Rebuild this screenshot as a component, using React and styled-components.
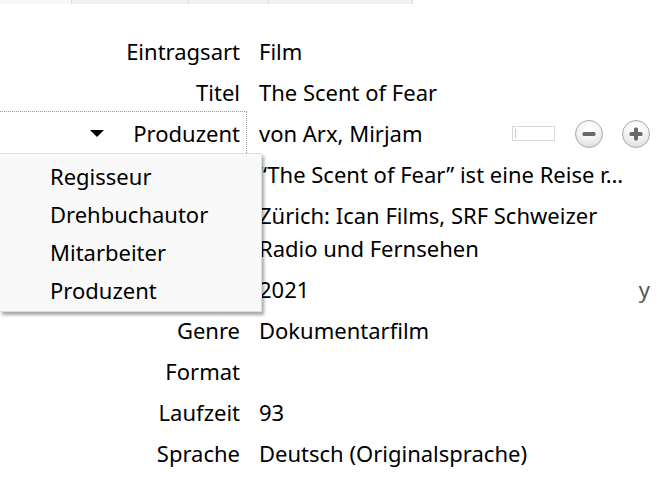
import React from "react";
import styled, { createGlobalStyle } from "styled-components";

const Global = createGlobalStyle`
  html, body {
    margin: 0;
    padding: 0;
    background: #ffffff;
  }
  body {
    font-family: "Noto Sans", "Open Sans", sans-serif;
    color: #000;
  }
`;

const Page = styled.div`
  position: relative;
  width: 664px;
  height: 482px;
  overflow: hidden;
  background: #fff;
`;

const Strip = styled.div`
  display: flex;
  height: 4px;
  width: 413px;
`;

const StripCell = styled.div`
  width: ${(p) => p.w}px;
  background: ${(p) => (p.light ? "#f7f7f7" : "#f0f0f0")};
  border-right: 1px solid #dcdcdc;
`;

const Form = styled.div`
  display: grid;
  grid-template-columns: 247px 1fr;
  column-gap: 12px;
  padding-top: 27px;
  font-size: 22px;
`;

const Label = styled.div`
  position: relative;
  text-align: right;
  padding: 4px 7px 4px 0;
  line-height: 33px;
  white-space: nowrap;

  ${(p) =>
    p.focused &&
    `
    &::after {
      content: "";
      position: absolute;
      left: -2px;
      right: 0;
      top: -2px;
      bottom: -3px;
      border: 1px dotted #9a9a9a;
    }
  `}
`;

const Value = styled.div`
  display: flex;
  align-items: flex-start;
  padding: 4px 14px 4px 0;
  line-height: 33px;
  min-width: 0;
`;

const ValueText = styled.div`
  flex: 1;
  min-width: 0;
  white-space: ${(p) => (p.wrap ? "normal" : "nowrap")};
  overflow: hidden;
  text-overflow: ellipsis;
`;

const Arrow = styled.span`
  display: inline-block;
  width: 0;
  height: 0;
  border-left: 7px solid transparent;
  border-right: 7px solid transparent;
  border-top: 7px solid #000;
  margin-right: 29px;
  vertical-align: middle;
  position: relative;
  top: -3px;
`;

const Controls = styled.div`
  display: flex;
  align-items: center;
  height: 33px;
`;

const MiniInput = styled.div`
  width: 39px;
  height: 13px;
  border: 1px solid #d8d8d8;
  background: #fff;
  margin-right: 20px;
  display: flex;
  align-items: center;
  padding-left: 2px;

  &::before {
    content: "";
    width: 1px;
    height: 9px;
    background: #c8c8c8;
  }
`;

const RoundButton = styled.div`
  width: 26px;
  height: 26px;
  border-radius: 50%;
  border: 1px solid #a9a9a9;
  background: radial-gradient(circle at 50% 25%, #ffffff 0%, #f3f3f3 50%, #d6d6d6 100%);
  display: flex;
  align-items: center;
  justify-content: center;
  margin-left: ${(p) => p.ml || 0}px;
`;

const Trailing = styled.span`
  color: #555;
  margin-left: 8px;
`;

const Menu = styled.div`
  position: absolute;
  left: 0;
  top: 153px;
  width: 261px;
  padding-top: 3px;
  padding-bottom: 2px;
  background: #f9f9f9;
  border: 1px solid #dedede;
  border-left: none;
  box-shadow: 2px 3px 3px rgba(0, 0, 0, 0.35);
  font-size: 22px;
`;

const MenuItem = styled.div`
  padding-left: 50px;
  height: 38px;
  line-height: 38px;
`;

const MinusIcon = () => (
  <svg width="16" height="16" viewBox="0 0 16 16">
    <rect x="1.5" y="6" width="13" height="4" rx="1.5" fill="#686868" />
  </svg>
);

const PlusIcon = () => (
  <svg width="16" height="16" viewBox="0 0 16 16">
    <rect x="1.5" y="6" width="13" height="4" rx="1.5" fill="#686868" />
    <rect x="6" y="1.5" width="4" height="13" rx="1.5" fill="#686868" />
  </svg>
);

const rows = [
  { label: "Eintragsart", value: "Film" },
  { label: "Titel", value: "The Scent of Fear" },
  { label: "Produzent", value: "von Arx, Mirjam", focused: true },
  { label: "", value: "\u201CThe Scent of Fear\u201D ist eine Reise r\u2026" },
  { label: "", value: "Zürich: Ican Films, SRF Schweizer Radio und Fernsehen", wrap: true },
  { label: "", value: "2021", trailing: "y" },
  { label: "Genre", value: "Dokumentarfilm" },
  { label: "Format", value: "" },
  { label: "Laufzeit", value: "93" },
  { label: "Sprache", value: "Deutsch (Originalsprache)" },
];

const App = () => {
  return (
    <Page>
      <Global />
      <Strip>
        <StripCell w={71} light />
        <StripCell w={116} />
        <StripCell w={79} />
        <StripCell w={143} />
      </Strip>
      <Form>
        {rows.map((r, i) => (
          <React.Fragment key={i}>
            <Label focused={r.focused}>
              {r.focused && <Arrow />}
              {r.label}
            </Label>
            <Value>
              <ValueText wrap={r.wrap}>
                {r.wrap ? (
                  <>
                    Zürich: Ican Films, SRF Schweizer
                    <br />
                    Radio und Fernsehen
                  </>
                ) : (
                  r.value
                )}
              </ValueText>
              {r.focused && (
                <Controls>
                  <MiniInput />
                  <RoundButton>
                    <MinusIcon />
                  </RoundButton>
                  <RoundButton ml={19}>
                    <PlusIcon />
                  </RoundButton>
                </Controls>
              )}
              {r.trailing && <Trailing>{r.trailing}</Trailing>}
            </Value>
          </React.Fragment>
        ))}
      </Form>
      <Menu>
        <MenuItem>Regisseur</MenuItem>
        <MenuItem>Drehbuchautor</MenuItem>
        <MenuItem>Mitarbeiter</MenuItem>
        <MenuItem>Produzent</MenuItem>
      </Menu>
    </Page>
  );
};

export default App;
